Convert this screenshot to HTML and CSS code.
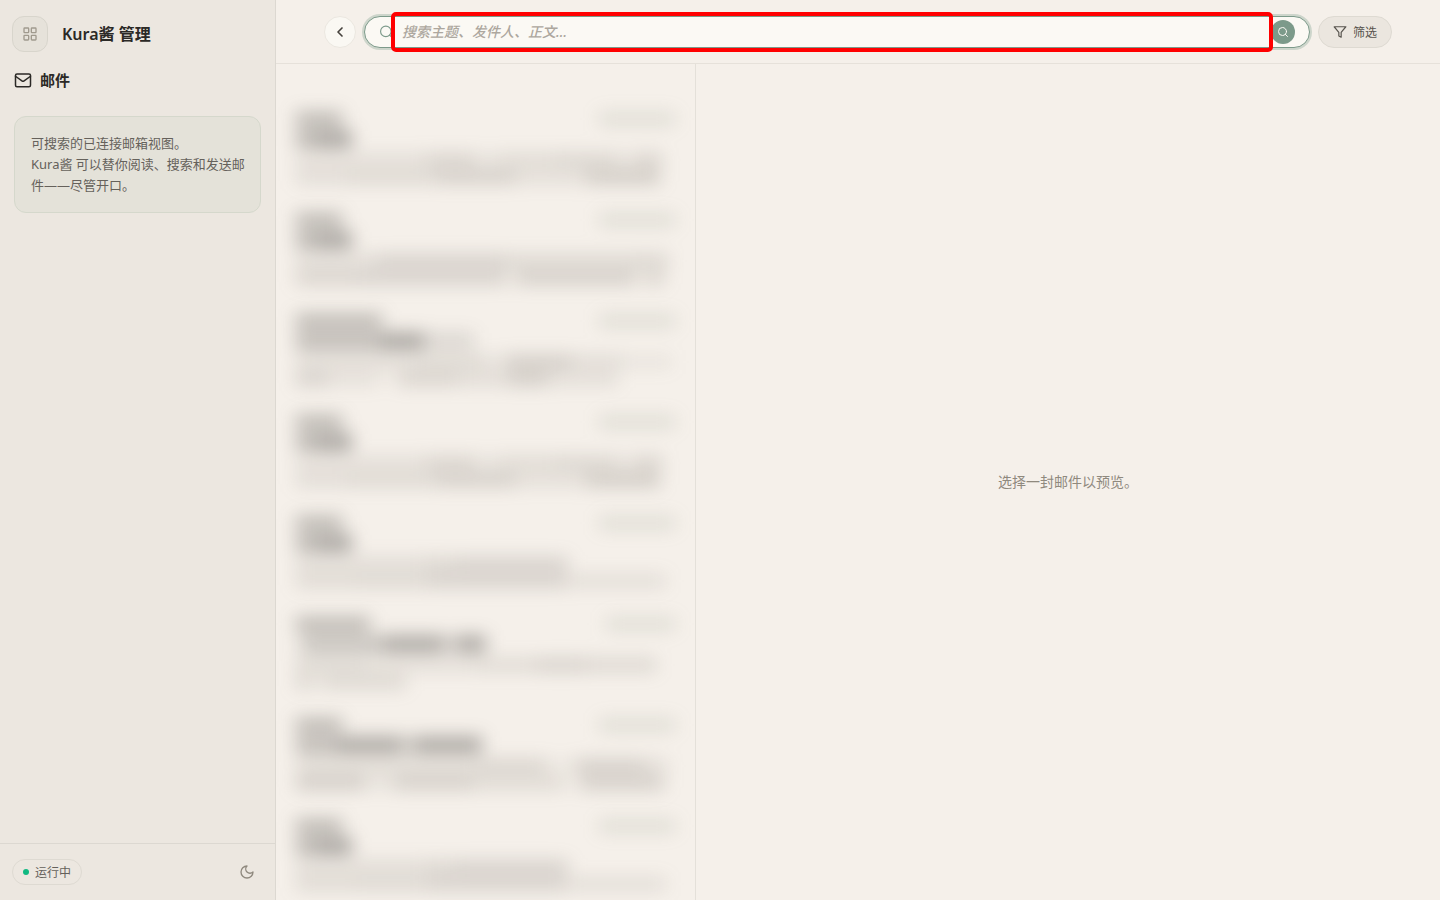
FILE: index.html
```html
<!DOCTYPE html>
<html lang="zh-CN">
<head>
<meta charset="utf-8">
<meta name="viewport" content="width=device-width, initial-scale=1">
<title>Kura酱 管理</title>
<link rel="stylesheet" href="styles.css">
</head>
<body>
<div class="app">
  <aside class="sidebar">
    <div class="brand">
      <button class="apps-button" type="button" aria-label="应用">
        <svg width="16" height="16" viewBox="0 0 24 24" fill="none" stroke="currentColor" stroke-width="2"><rect x="3" y="3" width="7" height="7" rx="1"/><rect x="14" y="3" width="7" height="7" rx="1"/><rect x="3" y="14" width="7" height="7" rx="1"/><rect x="14" y="14" width="7" height="7" rx="1"/></svg>
      </button>
      <h1 class="brand-name">Kura酱 管理</h1>
    </div>
    <h2 class="section-title">
      <svg width="18" height="18" viewBox="0 0 24 24" fill="none" stroke="currentColor" stroke-width="2" stroke-linecap="round" stroke-linejoin="round"><rect x="2" y="4" width="20" height="17" rx="2"/><path d="M2 7l9 6.500a2 2 0 0 0 2 0L22 7"/></svg>
      <span>邮件</span>
    </h2>
    <p class="note">可搜索的已连接邮箱视图。<br>Kura酱 可以替你阅读、搜索和发送邮件——尽管开口。</p>
    <footer class="sidebar-footer">
      <span class="status"><i class="status-dot"></i>运行中</span>
      <button class="theme-button" type="button" aria-label="切换主题">
        <svg width="16" height="16" viewBox="0 0 24 24" fill="none" stroke="currentColor" stroke-width="2" stroke-linecap="round" stroke-linejoin="round"><path d="M12 3a6 6 0 0 0 9 9 9 9 0 1 1-9-9Z"/></svg>
      </button>
    </footer>
  </aside>
  <main class="main">
    <header class="toolbar">
      <button class="back-button" type="button" aria-label="返回">
        <svg width="16" height="16" viewBox="0 0 24 24" fill="none" stroke="currentColor" stroke-width="2.500" stroke-linecap="round" stroke-linejoin="round"><path d="M15 18l-6-6 6-6"/></svg>
      </button>
      <form class="search">
        <svg class="search-icon" width="14" height="14" viewBox="0 0 24 24" fill="none" stroke="currentColor" stroke-width="2" stroke-linecap="round"><circle cx="10" cy="11" r="9"/><path d="M22 22l-5.500-4.500"/></svg>
        <input class="search-input" type="text" aria-label="搜索邮件" placeholder="搜索主题、发件人、正文…">
        <button class="search-button" type="submit" aria-label="搜索">
          <svg width="12" height="12" viewBox="0 0 24 24" fill="none" stroke="currentColor" stroke-width="2" stroke-linecap="round"><circle cx="11" cy="11" r="8"/><path d="M21 21l-4.300-4.300"/></svg>
        </button>
        <span class="highlight"></span>
      </form>
      <button class="filter-button" type="button">
        <svg width="14" height="14" viewBox="0 0 24 24" fill="none" stroke="currentColor" stroke-width="2" stroke-linecap="round" stroke-linejoin="round"><path d="M22 3H2l8 9.500V19l4 2v-8.500L22 3Z"/></svg>
        筛选
      </button>
    </header>
    <div class="content">
      <section class="mail-list" id="mail-list" aria-label="邮件列表"></section>
      <section class="preview">选择一封邮件以预览。</section>
    </div>
  </main>
</div>
<script src="list.js"></script>
</body>
</html>
```
FILE: styles.css
```css
* { box-sizing: border-box; }
body {
  margin: 0;
  background: #f5f0ea;
  color: #2b2926;
  font-family: "Noto Sans", "Noto Sans CJK SC", sans-serif;
  font-size: 14px;
}
button, input { margin: 0; padding: 0; font: inherit; }
button { display: flex; align-items: center; justify-content: center; cursor: pointer; }
svg { display: block; flex: none; }

.app { display: grid; grid-template-columns: 276px minmax(0, 1fr); height: 100vh; }

.sidebar {
  display: flex;
  flex-direction: column;
  background: #ece7e0;
  border-right: 1px solid #dcd8d1;
}
.brand { display: flex; align-items: center; gap: 14px; padding: 16px 12px 0; }
.apps-button {
  width: 36px;
  height: 36px;
  border: 1px solid #d8d5cc;
  border-radius: 12px;
  background: #e6e2da;
  color: #a09a8e;
}
.brand-name { margin: 0; font-size: 16px; font-weight: 600; line-height: 24px; }
.section-title {
  display: flex;
  align-items: center;
  gap: 8px;
  margin: 16px 14px 0;
  font-size: 15px;
  font-weight: 600;
  line-height: 24px;
}
.note {
  margin: 24px 14px 0;
  padding: 16px 12px 16px 16px;
  border: 1px solid #d5d8cc;
  border-radius: 12px;
  background: #e4e2d9;
  color: #65615b;
  font-size: 13px;
  line-height: 21px;
}
.sidebar-footer {
  display: flex;
  align-items: center;
  justify-content: space-between;
  height: 57px;
  margin-top: auto;
  padding: 0 12px;
  border-top: 1px solid #dcd8d1;
}
.status {
  display: flex;
  align-items: center;
  gap: 6px;
  height: 26px;
  padding: 0 10px;
  border: 1px solid #dedad2;
  border-radius: 13px;
  color: #65615b;
  font-size: 12px;
}
.status-dot { width: 6px; height: 6px; border-radius: 50%; background: #10b981; }
.theme-button { width: 32px; height: 32px; border: 0; background: none; color: #8f897e; }

.main { display: flex; flex-direction: column; min-width: 0; min-height: 0; }
.toolbar {
  display: flex;
  align-items: center;
  gap: 8px;
  height: 64px;
  padding: 0 48px;
  border-bottom: 1px solid #e6e1da;
}
.back-button {
  width: 32px;
  height: 32px;
  border: 1px solid #ebe7e0;
  border-radius: 50%;
  background: #faf8f3;
  color: #45413c;
}
.search {
  position: relative;
  display: flex;
  flex: 1;
  align-items: center;
  gap: 8px;
  height: 32px;
  padding: 0 14px 0 15px;
  border: 1px solid #7c9a8a;
  border-radius: 16px;
  background: #fbf9f4;
  box-shadow: 0 0 0 2px #cdd5cb;
}
.search-icon { color: #7c9a8a; }
.search-input {
  flex: 1;
  min-width: 0;
  height: 24px;
  border: 0;
  outline: 0;
  background: none;
  color: #2b2926;
}
.search-input::placeholder { color: #ada79e; font-style: italic; font-weight: 500; opacity: 1; }
.search-button { width: 24px; height: 24px; border: 0; border-radius: 50%; background: #7c9a8a; color: #fbf9f4; }
/* Frame laid over the search field */
.highlight {
  position: absolute;
  inset: -5px 36px -5px 26px;
  border: 4px solid #ff0000;
  border-radius: 5px;
  pointer-events: none;
}
.filter-button {
  gap: 6px;
  height: 32px;
  padding: 0 14px;
  border: 1px solid #dedad2;
  border-radius: 16px;
  background: #ebe6df;
  color: #57534d;
  font-size: 12px;
}

.content { display: grid; grid-template-columns: 420px minmax(0, 1fr); flex: 1; min-height: 0; }
.mail-list { overflow: hidden; padding: 39px 20px 0; border-right: 1px solid #e4e0d9; }
.mail { height: 101px; padding-top: 8px; filter: blur(9px); }
.mail-head { display: flex; align-items: center; justify-content: space-between; height: 16px; }
.line { display: flex; align-items: center; height: 17px; }
.line-subject { height: 24px; }
.bar { height: 12px; background: #77716a; }
.bar-sender { height: 12px; background: #4c4944; opacity: 0.4; }
.bar-subject { height: 16px; background: #34322f; }
.bar-time { background: #838a78; opacity: 0.2; }

.preview { display: flex; align-items: center; justify-content: center; padding-bottom: 2px; color: #8f897e; }
```
FILE: list.js
```javascript
// Each line is a list of [width in px, opacity] segments.
const bodyA = [[[130, 0.16], [50, 0.26], [20, 0.12], [60, 0.2], [60, 0.24], [20, 0.14], [26, 0.26]], [[50, 0.18], [90, 0.22], [80, 0.3], [70, 0.16], [74, 0.34]]];
const bodyC = [[[130, 0.18], [30, 0.24], [112, 0.28]], [[60, 0.2], [70, 0.22], [140, 0.28], [100, 0.16]]];
const mails = [
  { sender: 46, time: 76, subject: [[20, 0.32], [36, 0.42]], body: bodyA },
  { sender: 46, time: 76, subject: [[20, 0.32], [36, 0.42]], body: [[[80, 0.18], [130, 0.28], [130, 0.22], [32, 0.24]], [[60, 0.26], [150, 0.28], [10, 0.05], [120, 0.3], [10, 0.05], [18, 0.26]]] },
  { sender: 86, time: 76, subject: [[84, 0.3], [44, 0.42], [50, 0.14]], body: [[[120, 0.18], [70, 0.22], [20, 0.12], [66, 0.32], [50, 0.18], [50, 0.1]], [[32, 0.28], [50, 0.14], [20, 0.03], [60, 0.26], [50, 0.18], [40, 0.32], [70, 0.16]]] },
  { sender: 46, time: 76, subject: [[20, 0.32], [36, 0.42]], body: bodyA },
  { sender: 46, time: 76, subject: [[20, 0.32], [36, 0.42]], body: bodyC },
  { sender: 74, time: 69, subject: [[8, 0.1], [80, 0.26], [60, 0.4], [12, 0.15], [30, 0.4]], body: [[[70, 0.22], [110, 0.16], [60, 0.2], [50, 0.28], [70, 0.22]], [[16, 0.24], [10, 0.05], [84, 0.22]]] },
  { sender: 46, time: 76, subject: [[40, 0.3], [66, 0.4], [12, 0.18], [68, 0.4]], body: [[[180, 0.2], [70, 0.26], [30, 0.08], [70, 0.3], [22, 0.16]], [[68, 0.32], [30, 0.12], [80, 0.3], [90, 0.2], [16, 0.04], [84, 0.3]]] },
  { sender: 46, time: 76, subject: [[20, 0.32], [36, 0.42]], body: bodyC }
];

function bar(width, kind, opacity) {
  const el = document.createElement("span");
  el.className = "bar " + kind;
  el.style.width = width + "px";
  if (opacity !== undefined) el.style.opacity = opacity;
  return el;
}

function line(kind, segments, barKind) {
  const el = document.createElement("div");
  el.className = "line " + kind;
  for (const [width, opacity] of segments) el.append(bar(width, barKind, opacity));
  return el;
}

const list = document.getElementById("mail-list");
for (const mail of mails) {
  const item = document.createElement("article");
  item.className = "mail";
  const head = document.createElement("div");
  head.className = "mail-head";
  head.append(bar(mail.sender, "bar-sender"), bar(mail.time, "bar-time"));
  item.append(head, line("line-subject", mail.subject, "bar-subject"));
  for (const segments of mail.body) item.append(line("line-body", segments, "bar-body"));
  list.append(item);
}
```
